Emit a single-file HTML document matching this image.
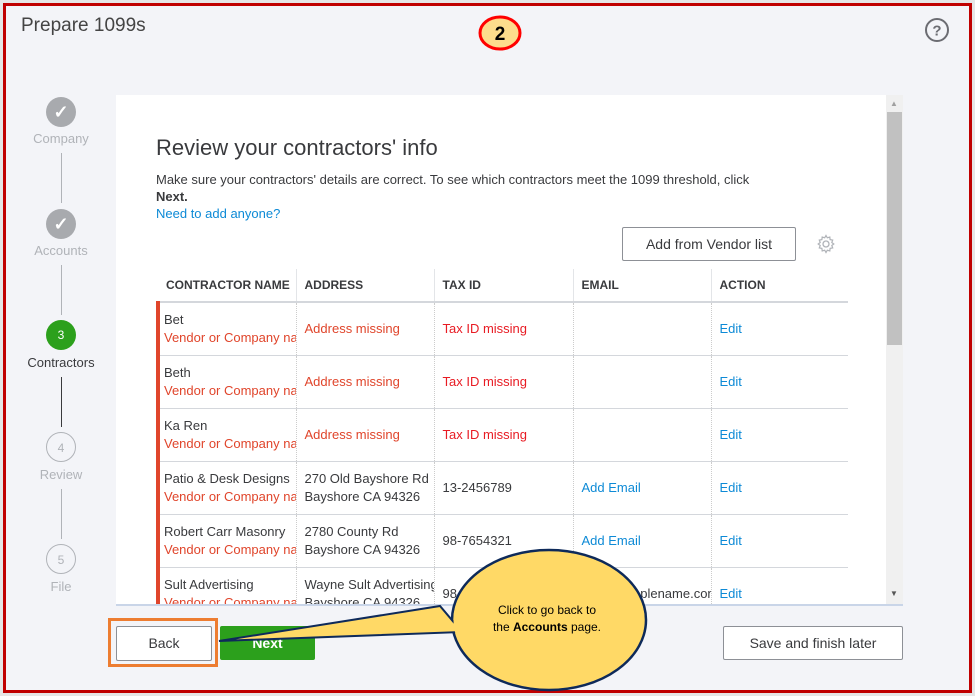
<!DOCTYPE html>
<html><head><meta charset="utf-8"><style>
*{box-sizing:border-box;margin:0;padding:0}
body{width:975px;height:696px;background:#e6e6e6;font-family:"Liberation Sans",sans-serif;position:relative;overflow:hidden}
.frame{position:absolute;left:3px;top:3px;width:969px;height:690px;border:3px solid #c00000;background:#f3f4f8}
.a{position:absolute}
.t{color:#393a3d}
.step{position:absolute;width:30px;height:30px;border-radius:50%;left:46px;text-align:center;line-height:30px;font-size:12px}
.lbl{position:absolute;width:120px;left:1px;text-align:center;font-size:13px;color:#b0b3b8}
.vl{position:absolute;left:61px;width:1px;background:#b0b3b8}
table{border-collapse:collapse;font-size:13px}
th{text-align:left;font-size:12px;font-weight:bold;color:#393a3d;height:33px;padding:0 8px;border-bottom:2px solid #d4d7dc;border-left:1px solid #e3e5e8;white-space:nowrap}
th:first-child{border-left:none}
td{height:53px;padding:0 8px;border-bottom:1px solid #d4d7dc;border-left:1px dotted #ccc;white-space:nowrap;overflow:hidden;color:#393a3d;line-height:18px;vertical-align:middle}
td:first-child{border-left:4px solid #e0452b;padding-left:4px}
.r{color:#e81b23}.o{color:#e0452b}.b{color:#0d8ad6}
.btn{position:absolute;border:1px solid #8d9096;border-radius:2px;background:#fff;text-align:center;font-size:14px;color:#393a3d}
</style></head><body>
<div class="frame"></div>
<div class="a t" style="left:21px;top:15px;font-size:19px;color:#444">Prepare 1099s</div>
<svg class="a" style="left:924px;top:17px" width="26" height="26"><circle cx="13" cy="13" r="11" fill="none" stroke="#6b6c72" stroke-width="2"/><text x="13" y="18.5" text-anchor="middle" font-size="15" font-weight="bold" fill="#6b6c72" font-family="Liberation Sans">?</text></svg>
<svg class="a" style="left:477px;top:13px" width="46" height="40"><ellipse cx="23" cy="20" rx="20" ry="16" fill="#fddc8c" stroke="#ff0000" stroke-width="3"/><text x="23" y="27" text-anchor="middle" font-size="19" font-weight="bold" fill="#000" font-family="Liberation Sans">2</text></svg>

<div class="step" style="top:97px;background:#a8aaae;color:#fff;font-size:18px;font-weight:bold">✓</div>
<div class="lbl" style="top:131px">Company</div>
<div class="vl" style="top:153px;height:50px"></div>
<div class="step" style="top:209px;background:#a8aaae;color:#fff;font-size:18px;font-weight:bold">✓</div>
<div class="lbl" style="top:243px">Accounts</div>
<div class="vl" style="top:265px;height:50px"></div>
<div class="step" style="top:320px;background:#2ca01c;color:#fff">3</div>
<div class="lbl" style="top:355px;color:#393a3d">Contractors</div>
<div class="vl" style="top:377px;height:50px;background:#393a3d"></div>
<div class="step" style="top:432px;border:1px solid #b0b3b8;color:#b0b3b8;background:#f3f4f8">4</div>
<div class="lbl" style="top:467px">Review</div>
<div class="vl" style="top:489px;height:50px"></div>
<div class="step" style="top:544px;border:1px solid #b0b3b8;color:#b0b3b8;background:#f3f4f8">5</div>
<div class="lbl" style="top:579px">File</div>

<div class="a" style="left:116px;top:95px;width:787px;height:511px;background:#fff;overflow:hidden;border-bottom:2px solid #c9d5e8">
 <div class="a" style="left:770px;top:0;width:17px;height:511px;background:#f0f0f0"></div>
 <div class="a" style="left:771px;top:17px;width:15px;height:233px;background:#c1c1c1"></div>
 <div class="a" style="left:774px;top:4px;font-size:8px;color:#a0a0a0">▲</div>
 <div class="a" style="left:774px;top:494px;font-size:8px;color:#555">▼</div>
 <div class="a t" style="left:40px;top:40px;font-size:22px">Review your contractors' info</div>
 <div class="a t" style="left:40px;top:76px;font-size:13px;line-height:17px">Make sure your contractors' details are correct. To see which contractors meet the 1099 threshold, click<br><b>Next.</b><br><span class="b">Need to add anyone?</span></div>
 <div class="btn" style="left:506px;top:132px;width:174px;height:34px;line-height:32px">Add from Vendor list</div>
 <svg class="a" style="left:700px;top:139px" width="20" height="20" viewBox="0 0 20 20"><circle cx="10" cy="10" r="3" fill="none" stroke="#b0b3b8" stroke-width="1.3"/><path d="M10 1.5l1.3 2.3 2.5-.8.3 2.6 2.6.5-.9 2.4 2 1.5-2 1.5.9 2.4-2.6.5-.3 2.6-2.5-.8L10 18.5l-1.3-2.3-2.5.8-.3-2.6-2.6-.5.9-2.4-2-1.5 2-1.5-.9-2.4 2.6-.5.3-2.6 2.5.8z" fill="none" stroke="#b0b3b8" stroke-width="1.2"/></svg>
 <table class="a" style="left:40px;top:174px;width:690px;table-layout:fixed">
  <colgroup><col style="width:138px"><col style="width:138px"><col style="width:139px"><col style="width:138px"><col style="width:137px"></colgroup>
  <tr><th>CONTRACTOR NAME</th><th>ADDRESS</th><th>TAX ID</th><th>EMAIL</th><th>ACTION</th></tr>
  <tr><td>Bet<br><span class="o">Vendor or Company name</span></td><td class="o">Address missing</td><td class="r">Tax ID missing</td><td></td><td class="b">Edit</td></tr>
  <tr><td>Beth<br><span class="o">Vendor or Company name</span></td><td class="o">Address missing</td><td class="r">Tax ID missing</td><td></td><td class="b">Edit</td></tr>
  <tr><td>Ka Ren<br><span class="o">Vendor or Company name</span></td><td class="o">Address missing</td><td class="r">Tax ID missing</td><td></td><td class="b">Edit</td></tr>
  <tr><td>Patio &amp; Desk Designs<br><span class="o">Vendor or Company name</span></td><td>270 Old Bayshore Rd<br>Bayshore CA 94326</td><td>13-2456789</td><td class="b">Add Email</td><td class="b">Edit</td></tr>
  <tr><td>Robert Carr Masonry<br><span class="o">Vendor or Company name</span></td><td>2780 County Rd<br>Bayshore CA 94326</td><td>98-7654321</td><td class="b">Add Email</td><td class="b">Edit</td></tr>
  <tr><td>Sult Advertising<br><span class="o">Vendor or Company name</span></td><td>Wayne Sult Advertising<br>Bayshore CA 94326</td><td>98-7654321</td><td>info@samplename.com</td><td class="b">Edit</td></tr>
 </table>
</div>

<div class="a" style="left:108px;top:618px;width:110px;height:49px;border:3px solid #ed7d31"></div>
<div class="btn" style="left:116px;top:626px;width:96px;height:35px;line-height:33px">Back</div>
<div class="a" style="left:220px;top:626px;width:95px;height:34px;background:#2ca01c;border-radius:2px;color:#fff;font-weight:bold;font-size:14px;text-align:center;line-height:34px">Next</div>
<div class="btn" style="left:723px;top:626px;width:180px;height:34px;line-height:32px">Save and finish later</div>

<svg class="a" style="left:0;top:0" width="975" height="696">
 <ellipse cx="549" cy="620" rx="97" ry="70" fill="#ffd966" stroke="#0e2a5a" stroke-width="2.5"/>
 <polygon points="219,641 440,606 462,632" fill="#ffd966" stroke="#0e2a5a" stroke-width="2" stroke-linejoin="miter"/>
 <ellipse cx="549" cy="620" rx="95.5" ry="68.5" fill="#ffd966"/>
 <text x="547" y="614" text-anchor="middle" font-size="12" fill="#000" font-family="Liberation Sans">Click to go back to</text>
 <text x="547" y="631" text-anchor="middle" font-size="12" fill="#000" font-family="Liberation Sans">the <tspan font-weight="bold">Accounts</tspan> page.</text>
</svg>
</body></html>
